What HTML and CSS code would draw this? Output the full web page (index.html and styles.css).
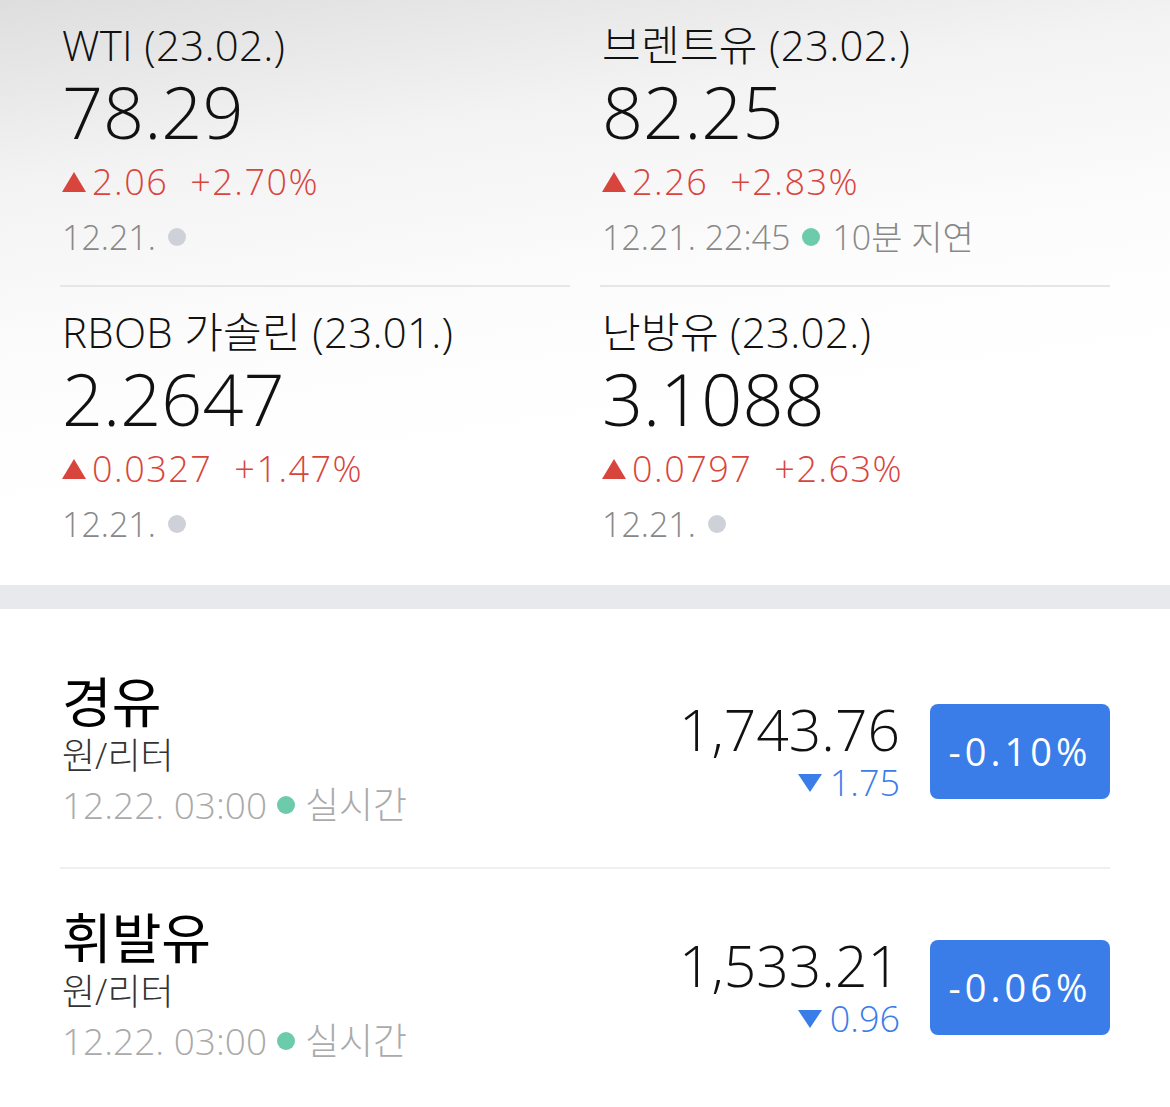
FILE: index.html
```html
<!DOCTYPE html>
<html lang="ko">
<head>
    <meta charset="UTF-8">
    <meta name="viewport" content="width=device-width, initial-scale=1.0">
    <title>유가</title>
    <link rel="stylesheet" href="styles.css">
</head>
<body>
    <section class="futures">
        <div class="quote divided">
            <div class="quote-title">WTI (23.02.)</div>
            <div class="quote-price">78.29</div>
            <div class="quote-change up"><span class="tri-up"></span>2.06<span class="pct">+2.70%</span></div>
            <div class="quote-time">12.21. <span class="dot gray"></span></div>
        </div>
        <div class="quote divided">
            <div class="quote-title">브렌트유 (23.02.)</div>
            <div class="quote-price">82.25</div>
            <div class="quote-change up"><span class="tri-up"></span>2.26<span class="pct">+2.83%</span></div>
            <div class="quote-time">12.21. 22:45 <span class="dot green"></span> 10분 지연</div>
        </div>
        <div class="quote">
            <div class="quote-title">RBOB 가솔린 (23.01.)</div>
            <div class="quote-price">2.2647</div>
            <div class="quote-change up"><span class="tri-up"></span>0.0327<span class="pct">+1.47%</span></div>
            <div class="quote-time">12.21. <span class="dot gray"></span></div>
        </div>
        <div class="quote">
            <div class="quote-title">난방유 (23.02.)</div>
            <div class="quote-price">3.1088</div>
            <div class="quote-change up"><span class="tri-up"></span>0.0797<span class="pct">+2.63%</span></div>
            <div class="quote-time">12.21. <span class="dot gray"></span></div>
        </div>
    </section>

    <div class="band"></div>

    <section class="domestic">
        <div class="fuel-row">
            <div class="fuel-info">
                <div class="fuel-name">경유</div>
                <div class="fuel-unit">원/리터</div>
                <div class="fuel-time">12.22. 03:00 <span class="dot green"></span> 실시간</div>
            </div>
            <div class="fuel-price">
                <div class="fuel-value">1,743.76</div>
                <div class="fuel-change"><span class="tri-down"></span>1.75</div>
            </div>
            <div class="fuel-badge">-0.10%</div>
        </div>
        <div class="fuel-row">
            <div class="fuel-info">
                <div class="fuel-name">휘발유</div>
                <div class="fuel-unit">원/리터</div>
                <div class="fuel-time">12.22. 03:00 <span class="dot green"></span> 실시간</div>
            </div>
            <div class="fuel-price">
                <div class="fuel-value">1,533.21</div>
                <div class="fuel-change"><span class="tri-down"></span>0.96</div>
            </div>
            <div class="fuel-badge">-0.06%</div>
        </div>
    </section>
</body>
</html>
```

FILE: styles.css
```css
body {
    margin: 0;
    font-family: "Open Sans", "Noto Sans CJK KR", sans-serif;
    font-weight: 300;
    color: #111;
    background-color: #fff;
}
.futures {
    display: grid;
    grid-template-columns: 1fr 1fr;
    column-gap: 30px;
    padding: 0 60px;
    background: linear-gradient(172deg, #dedede 0%, #f3f3f3 25%, #fcfcfc 50%, #fff 70%);
}
.quote {
    display: flex;
    flex-direction: column;
    padding: 19px 0 23px 2px;
}
.quote.divided {
    border-bottom: 2px solid #e6e6e6;
}
.quote-title {
    height: 52px;
    font-size: 42px;
    line-height: 52px;
    letter-spacing: 0.3px;
    color: #111;
}
.quote-price {
    height: 76px;
    font-size: 72px;
    line-height: 76px;
    color: #111;
    margin-top: 2px;
}
.quote-change {
    display: flex;
    align-items: center;
    font-size: 36px;
    line-height: 50px;
    letter-spacing: 1.5px;
    margin-top: 8px;
}
.quote-change.up {
    color: #d8453d;
}
.pct {
    margin-left: 22px;
}
.tri-up {
    width: 0;
    height: 0;
    border-left: 12px solid transparent;
    border-right: 12px solid transparent;
    border-bottom: 20px solid #d8453d;
    margin-right: 6px;
}
.quote-time {
    display: flex;
    align-items: center;
    gap: 12px;
    height: 50px;
    font-size: 34px;
    line-height: 50px;
    color: #888;
    margin-top: 5px;
}
.dot {
    display: inline-block;
    width: 18px;
    height: 18px;
    border-radius: 50%;
}
.dot.gray {
    background-color: #cfd1d9;
}
.dot.green {
    background-color: #6ccbab;
}
.band {
    height: 24px;
    margin-top: 13px;
    background-color: #e8e9ed;
}
.domestic {
    padding: 44px 60px 0;
}
.fuel-row {
    display: flex;
    align-items: center;
    padding: 18px 0 36px 2px;
}
.fuel-row + .fuel-row {
    border-top: 2px solid #efefef;
    padding-top: 38px;
}
.fuel-info {
    flex: 1;
    display: flex;
    flex-direction: column;
}
.fuel-name {
    height: 62px;
    font-size: 54px;
    line-height: 62px;
    font-weight: 400;
    color: #000;
}
.fuel-unit {
    height: 46px;
    font-size: 36px;
    line-height: 46px;
    color: #333;
}
.fuel-time {
    display: flex;
    align-items: center;
    gap: 10px;
    height: 52px;
    font-size: 37px;
    line-height: 52px;
    color: #aaa;
}
.fuel-price {
    display: flex;
    flex-direction: column;
    align-items: flex-end;
    margin-right: 30px;
}
.fuel-value {
    font-size: 57px;
    line-height: 64px;
    color: #111;
}
.fuel-change {
    display: flex;
    align-items: center;
    font-size: 36px;
    line-height: 44px;
    color: #3a7de8;
}
.tri-down {
    width: 0;
    height: 0;
    border-left: 12px solid transparent;
    border-right: 12px solid transparent;
    border-top: 18px solid #3a7de8;
    margin-right: 8px;
}
.fuel-badge {
    width: 180px;
    height: 95px;
    border-radius: 8px;
    background-color: #3a7de8;
    color: #fff;
    font-size: 38px;
    font-weight: 400;
    letter-spacing: 4px;
    display: flex;
    align-items: center;
    justify-content: center;
}
```
